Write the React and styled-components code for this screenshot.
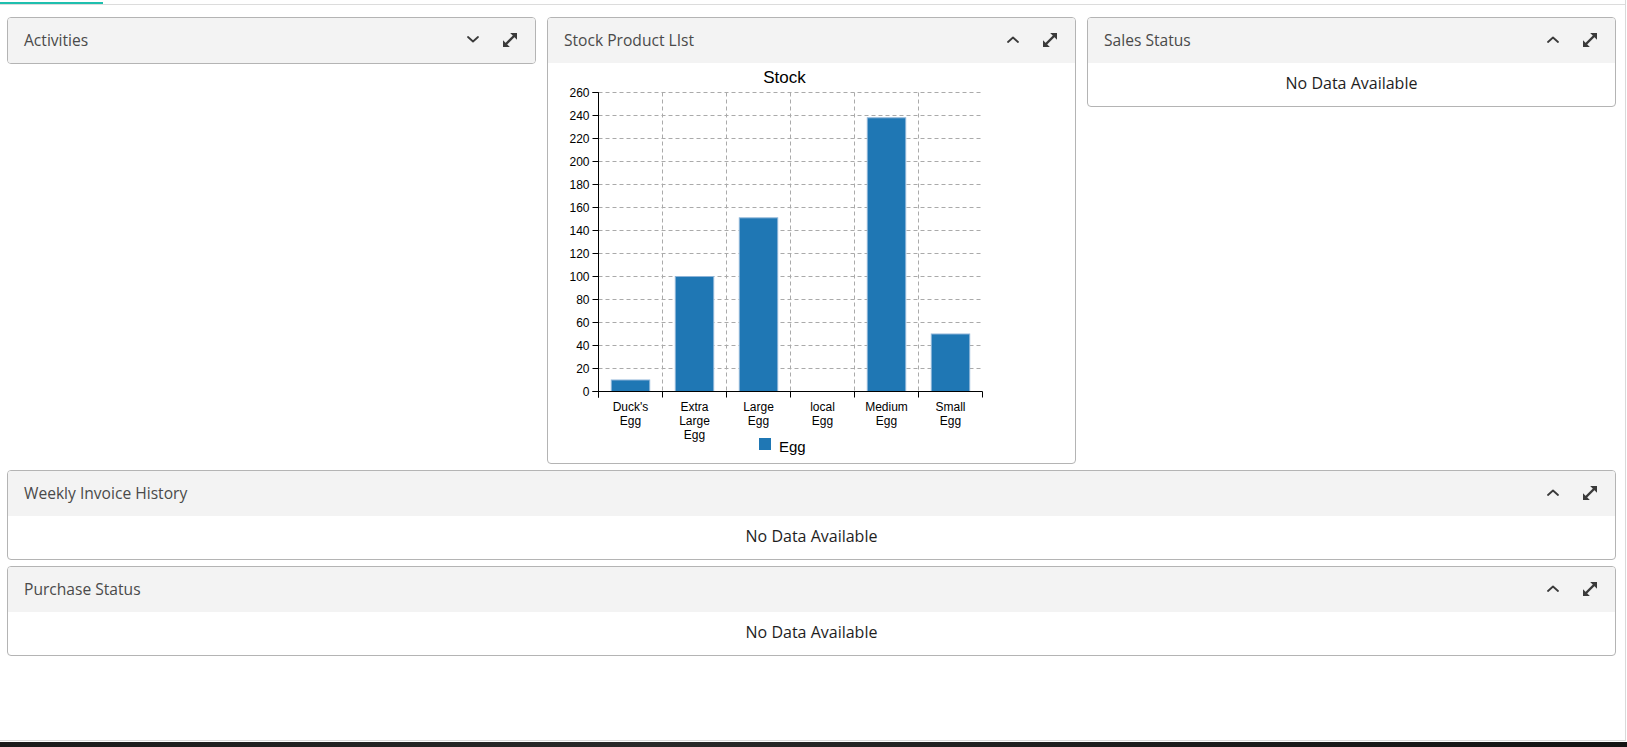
import React from 'react'
import styled, { createGlobalStyle } from 'styled-components'

const GlobalStyle = createGlobalStyle`
  html, body {
    margin: 0;
    padding: 0;
    background: #fff;
    font-family: "Open Sans", "Noto Sans", sans-serif;
  }
`

const Page = styled.div`
  width: 1626px;
  height: 741px;
  box-sizing: border-box;
  border-right: 1px solid #d9d9d9;
  border-bottom: 1px solid #d9d9d9;
`

const TabBar = styled.div`
  height: 4px;
  border-bottom: 1px solid #dcdcdc;
  display: flex;
`

const Tab = styled.div`
  width: 103px;
  height: 4px;
  box-sizing: border-box;
  border-bottom: 2px solid #1fbfae;
`

const Dashboard = styled.div`
  padding: 12px 9px 0 7px;
  display: flex;
  flex-direction: column;
  gap: 6px;
`

const TopRow = styled.div`
  display: grid;
  grid-template-columns: repeat(3, 1fr);
  column-gap: 11px;
  align-items: start;
`

const Card = styled.section`
  border: 1px solid #b4b4b4;
  border-radius: 4px;
  overflow: hidden;
  background: #fff;
`

const Header = styled.header`
  box-sizing: border-box;
  height: 45px;
  background: #f3f3f3;
  display: flex;
  align-items: center;
  justify-content: space-between;
  padding: 0 18px 2px 16px;
`

const Title = styled.h3`
  margin: 0;
  font-size: 15.6px;
  font-weight: 400;
  color: #4a4a4a;
`

const Actions = styled.div`
  display: flex;
  align-items: center;
  gap: 24px;
  color: #3a3a3a;
`

const IconButton = styled.span`
  display: flex;
  align-items: center;
  justify-content: center;
  width: ${props => props.w}px;
  height: 14px;
  cursor: pointer;
`

const Empty = styled.div`
  padding: 9px 0 12px;
  line-height: 22px;
  text-align: center;
  font-size: 16px;
  color: #1e1e1e;
`

const ChartBody = styled.div`
  height: 400px;
  svg {
    display: block;
    font-family: "Liberation Sans", Arial, sans-serif;
  }
`

const Taskbar = styled.div`
  margin-top: 1px;
  height: 5px;
  background: linear-gradient(90deg, #1b1b1b 0%, #2a2a2a 40%, #1d1d1d 70%, #141414 100%);
`

const Chevron = ({ up }) => (
  <svg width="12" height="7" viewBox="0 0 12 7">
    <polyline
      points={up ? '1,6 6,1.5 11,6' : '1,1 6,5.5 11,1'}
      fill="none"
      stroke="currentColor"
      strokeWidth="1.8"
      strokeLinecap="round"
      strokeLinejoin="round"
    />
  </svg>
)

// diagonal double arrow, bottom-left to top-right
const Expand = () => (
  <svg width="14" height="14" viewBox="0 0 14 14">
    <line x1="3" y1="11" x2="11" y2="3" stroke="currentColor" strokeWidth="2.4" />
    <polygon points="14,0 14,6.8 7.2,0" fill="currentColor" />
    <polygon points="0,14 0,7.2 6.8,14" fill="currentColor" />
  </svg>
)

const stock = [
  { name: ["Duck's", 'Egg'], v: 10 },
  { name: ['Extra', 'Large', 'Egg'], v: 100 },
  { name: ['Large', 'Egg'], v: 151 },
  { name: ['local', 'Egg'], v: 0 },
  { name: ['Medium', 'Egg'], v: 238 },
  { name: ['Small', 'Egg'], v: 50 },
]

const X0 = 50.5
const BAND = 64
const Y0 = 328.5
const XEND = X0 + BAND * stock.length
const yOf = v => Y0 - v * 1.15

const StockChart = () => {
  const ticks = []
  for (let t = 0; t <= 260; t += 20) ticks.push(t)

  return (
    <svg width="527" height="400">
      <text x="236.5" y="19.5" textAnchor="middle" fontSize="17" fill="#000">Stock</text>

      {/* grid */}
      {ticks.map(t => (
        <line key={'h' + t} x1={X0} x2={XEND} y1={yOf(t)} y2={yOf(t)}
          stroke="#aaa" strokeDasharray="4 3" />
      ))}
      {stock.slice(1).map((_, i) => (
        <line key={'v' + i} x1={X0 + BAND * (i + 1)} x2={X0 + BAND * (i + 1)}
          y1={yOf(260)} y2={Y0} stroke="#aaa" strokeDasharray="4 3" />
      ))}

      {/* bars */}
      {stock.map((d, i) => (
        d.v > 0 && (
          <rect key={'b' + i}
            x={X0 + BAND * i + 12.8} width={38.4}
            y={yOf(d.v)} height={d.v * 1.15}
            fill="#1f77b4" stroke="#8db4d8" strokeWidth="1" />
        )
      ))}

      {/* y axis */}
      <path d={`M${X0 - 6},${yOf(260)}H${X0}V${Y0}H${X0 - 6}`} fill="none" stroke="#000" />
      {ticks.map(t => (
        <g key={'yt' + t}>
          <line x1={X0 - 6} x2={X0} y1={yOf(t)} y2={yOf(t)} stroke="#000" />
          <text x={X0 - 9} y={yOf(t) + 4} textAnchor="end" fontSize="12" fill="#000">{t}</text>
        </g>
      ))}

      {/* x axis */}
      <path d={`M${X0},${Y0 + 6}V${Y0}H${XEND}V${Y0 + 6}`} fill="none" stroke="#000" />
      {stock.map((d, i) => (
        <g key={'xt' + i}>
          <line x1={X0 + BAND * i} x2={X0 + BAND * i} y1={Y0} y2={Y0 + 6} stroke="#000" />
          <text x={X0 + BAND * i + BAND / 2} y={Y0 + 19} textAnchor="middle" fontSize="12" fill="#000">
            {d.name.map((n, k) => (
              <tspan key={k} x={X0 + BAND * i + BAND / 2} dy={k === 0 ? 0 : 14}>{n}</tspan>
            ))}
          </text>
        </g>
      ))}

      {/* legend */}
      <rect x="211" y="375" width="12" height="12" fill="#1f77b4" />
      <text x="231" y="389" fontSize="15" fill="#000">Egg</text>
    </svg>
  )
}

const Widget = ({ title, open, children }) => (
  <Card>
    <Header>
      <Title>{title}</Title>
      <Actions>
        <IconButton w={12}><Chevron up={open} /></IconButton>
        <IconButton w={14}><Expand /></IconButton>
      </Actions>
    </Header>
    {open && children}
  </Card>
)

const App = () => (
  <>
    <GlobalStyle />
    <Page>
      <TabBar>
        <Tab />
      </TabBar>
      <Dashboard>
        <TopRow>
          <Widget title="Activities" open={false} />
          <Widget title="Stock Product LIst" open>
            <ChartBody>
              <StockChart />
            </ChartBody>
          </Widget>
          <Widget title="Sales Status" open>
            <Empty>No Data Available</Empty>
          </Widget>
        </TopRow>
        <Widget title="Weekly Invoice History" open>
          <Empty>No Data Available</Empty>
        </Widget>
        <Widget title="Purchase Status" open>
          <Empty>No Data Available</Empty>
        </Widget>
      </Dashboard>
    </Page>
    <Taskbar />
  </>
)

export default App
